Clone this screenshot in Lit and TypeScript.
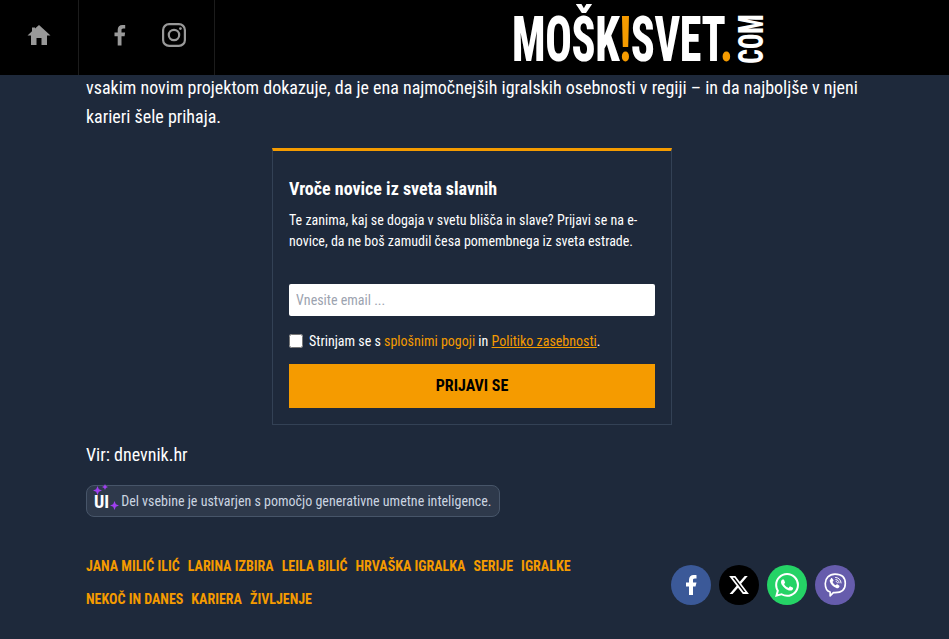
import { LitElement, html, css } from "lit";
import { customElement } from "lit/decorators.js";

@customElement("app-root")
export class AppRoot extends LitElement {
  static styles = css`
    :host { display: block; width: 949px; height: 639px; overflow: hidden; background: #1e293b; color: #fff; font-family: "Roboto Condensed", Roboto, sans-serif; }
    .bar { height: 75px; background: #000; display: flex; position: relative; z-index: 1; }
    .home { width: 79px; display: flex; align-items: center; justify-content: center; border-right: 1px solid #1c1c1c; box-sizing: border-box; padding-bottom: 5px; }
    .social { width: 136px; box-sizing: border-box; border-right: 1px solid #1c1c1c; display: flex; align-items: center; gap: 31px; padding: 0 0 5px 28px; }
    .logo { margin-left: 297px; display: flex; height: 75px; align-items: flex-start; }
    .logo-main { font: 800 63px/75px "Roboto Condensed"; color: #fff; display: block; transform: scaleX(.7); transform-origin: left top; width: 226px; white-space: nowrap; margin-top: 2px; letter-spacing: -.4px; }
    .logo-main b { color: #f59b00; font-weight: 800; }
    .logo-com { width: 26px; height: 46px; margin-top: 16px; position: relative; }
    .logo-com span { position: absolute; left: 13px; top: 23px; font: 800 35px/1 "Roboto Condensed"; color: #fff; white-space: nowrap; transform: translate(-50%, -50%) rotate(-90deg) scaleX(.73); }
    main { padding: 0 86px; }
    .lead { margin: -1px 0 0; font-size: 18px; line-height: 28.8px; }
    .card { width: 400px; height: 277px; box-sizing: border-box; margin: 16px 0 0 186px; border: 1px solid #334155; border-top: 3px solid #f59b00; padding: 27px 16px 16px; }
    h3 { margin: 0; font-size: 18px; font-weight: 700; line-height: 22px; }
    .card p { margin: 10px 0 0; font-size: 14px; line-height: 21px; }
    input[type=email] { display: block; width: 100%; height: 32px; box-sizing: border-box; margin-top: 32px; border: 0; border-radius: 2px; padding: 0 7px; font: inherit; font-size: 14px; background: #fff; }
    input::placeholder { color: #9ca3af; }
    .agree { display: flex; align-items: center; height: 20px; margin-top: 15px; font-size: 14px; gap: 6px; }
    .agree input { width: 14px; height: 14px; margin: 0; }
    .agree a { color: #f59b00; text-decoration: none; }
    .agree a.u { text-decoration: underline; }
    button { display: block; width: 100%; height: 44px; margin-top: 13px; border: 0; background: #f59b00; color: #000; font: inherit; font-weight: 700; font-size: 16px; }
    .vir { margin: 18px 0 0; font-size: 18px; line-height: 24px; }
    .ai { display: flex; align-items: center; height: 32px; box-sizing: border-box; width: 414px; margin-top: 18px; background: #2e394b; border: 1px solid #475569; border-radius: 8px; padding-left: 7px; font-size: 14px; color: #cbd5e1; position: relative; }
    .ai b { color: #fff; font-size: 18px; line-height: 1; padding-top: 2px; }
    .ai span { margin-left: 12px; }
    .spark { position: absolute; fill: #a03ff0; }
    .foot { display: flex; justify-content: space-between; margin-top: 33px; }
    .tags { width: 520px; display: flex; flex-wrap: wrap; gap: 0 8px; }
    .tags a { color: #f59b00; font-weight: 700; font-size: 14px; line-height: 33px; }
    .share { display: flex; gap: 8px; padding: 15px 8px 0 0; }
    .c { width: 40px; height: 40px; border-radius: 50%; display: flex; align-items: center; justify-content: center; fill: #fff; }
    .fb { background: #3b5998; } .x { background: #000; } .wa { background: #25d366; } .vb { background: #665cac; }
  `;
  render() {
    const spark = "M5 0 6.500 3.500 10 5 6.500 6.500 5 10 3.500 6.500 0 5 3.500 3.500z";
    return html`
      <div class="bar">
        <div class="home"><svg width="24" height="24" viewBox="0 0 24 24" fill="#999"><path d="M9.500 22v-7h5v7h5.500v-9.500H23.500L12 2 8 5.600V4.500H5v3.800L.5 12.500H4V22z"/></svg></div>
        <div class="social">
          <svg width="24" height="24" viewBox="0 0 24 24" fill="#999"><path d="M14.500 22.500v-9.300h3.100l.5-3.700h-3.600V7.200c0-1.100.3-1.800 1.800-1.800h1.900V2.100c-.3 0-1.500-.1-2.800-.1-2.800 0-4.700 1.700-4.700 4.800v2.700H7.500v3.700h3.200v9.300z"/></svg>
          <svg width="24" height="24" viewBox="0 0 24 24" fill="none" stroke="#999" stroke-width="2.200"><rect x="1.100" y="1.100" width="21.800" height="21.800" rx="6"/><circle cx="12" cy="12" r="5.200"/><circle cx="18.400" cy="5.600" r="1.400" fill="#999" stroke="none"/></svg>
        </div>
        <div class="logo"><span class="logo-main">MOŠK<b>!</b>SVET<b>.</b></span><div class="logo-com"><span>COM</span></div></div>
      </div>
      <main>
        <p class="lead">vsakim novim projektom dokazuje, da je ena najmočnejših igralskih osebnosti v regiji – in da najboljše v njeni karieri šele prihaja.</p>
        <div class="card">
          <h3>Vroče novice iz sveta slavnih</h3>
          <p>Te zanima, kaj se dogaja v svetu blišča in slave? Prijavi se na e-novice, da ne boš zamudil česa pomembnega iz sveta estrade.</p>
          <input type="email" placeholder="Vnesite email ..." />
          <label class="agree"><input type="checkbox" /><span>Strinjam se s <a>splošnimi pogoji</a> in <a class="u">Politiko zasebnosti</a>.</span></label>
          <button>PRIJAVI SE</button>
        </div>
        <p class="vir">Vir: dnevnik.hr</p>
        <div class="ai">
          <svg class="spark" style="left:6px;top:0" width="9" height="9" viewBox="0 0 10 10"><path d=${spark}/></svg>
          <svg class="spark" style="left:15px;top:-2px" width="6" height="6" viewBox="0 0 10 10"><path d=${spark}/></svg>
          <svg class="spark" style="left:23px;top:15px" width="9" height="9" viewBox="0 0 10 10"><path d=${spark}/></svg>
          <b>UI</b><span>Del vsebine je ustvarjen s pomočjo generativne umetne inteligence.</span></div>
        <div class="foot">
          <div class="tags"><a>JANA MILIĆ ILIĆ</a><a>LARINA IZBIRA</a><a>LEILA BILIĆ</a><a>HRVAŠKA IGRALKA</a><a>SERIJE</a><a>IGRALKE</a><a>NEKOČ IN DANES</a><a>KARIERA</a><a>ŽIVLJENJE</a></div>
          <div class="share">
            <div class="c fb"><svg width="24" height="24" viewBox="0 0 24 24"><path d="M14 13.500h2.500l1-4H14v-2c0-1.030 0-2 2-2h1.500V2.140c-.326-.043-1.557-.14-2.857-.14C11.928 2 10 3.657 10 6.700v2.800H7v4h3V22h4v-8.500z"/></svg></div>
            <div class="c x"><svg width="22" height="22" viewBox="0 0 24 24"><path d="M18.244 2.250h3.308l-7.227 8.260 8.502 11.240H16.170l-5.214-6.817L4.990 21.750H1.680l7.730-8.835L1.254 2.250H8.080l4.713 6.231zm-1.161 17.520h1.833L7.084 4.126H5.117z"/></svg></div>
            <div class="c wa"><svg width="24" height="24" viewBox="0 0 24 24"><path d="M17.472 14.382c-.297-.149-1.758-.867-2.030-.967-.273-.099-.471-.148-.670.150-.197.297-.767.966-.940 1.164-.173.199-.347.223-.644.075-.297-.150-1.255-.463-2.390-1.475-.883-.788-1.480-1.761-1.653-2.059-.173-.297-.018-.458.130-.606.134-.133.298-.347.446-.520.149-.174.198-.298.298-.497.099-.198.050-.371-.025-.520-.075-.149-.669-1.612-.916-2.207-.242-.579-.487-.500-.669-.510-.173-.008-.371-.010-.570-.010-.198 0-.520.074-.792.372-.272.297-1.040 1.016-1.040 2.479 0 1.462 1.065 2.875 1.213 3.074.149.198 2.096 3.200 5.077 4.487.709.306 1.262.489 1.694.625.712.227 1.360.195 1.871.118.571-.085 1.758-.719 2.006-1.413.248-.694.248-1.289.173-1.413-.074-.124-.272-.198-.570-.347m-5.421 7.403h-.004a9.870 9.870 0 01-5.031-1.378l-.361-.214-3.741.982.998-3.648-.235-.374a9.860 9.860 0 01-1.510-5.260c.001-5.450 4.436-9.884 9.888-9.884 2.640 0 5.122 1.030 6.988 2.898a9.825 9.825 0 012.893 6.994c-.003 5.450-4.437 9.884-9.885 9.884m8.413-18.297A11.815 11.815 0 0012.050 0C5.495 0 .160 5.335.157 11.892c0 2.096.547 4.142 1.588 5.945L.057 24l6.305-1.654a11.882 11.882 0 005.683 1.448h.005c6.554 0 11.890-5.335 11.893-11.893a11.821 11.821 0 00-3.480-8.413z"/></svg></div>
            <div class="c vb"><svg width="26" height="26" viewBox="0 0 24 24" fill="none" stroke="#fff" stroke-linecap="round" stroke-linejoin="round"><path stroke-width="1.500" d="M12 2c6 0 9.500 2.500 9.500 8.500S18 19 12 19h-1.500l-3 3v-3.500c-3-1-4.500-3.500-4.500-8S6.500 2 12 2z"/><path fill="#fff" stroke="none" d="M8.200 5.800c.5-.3 1-.2 1.300.2l1 1.400c.3.400.2.900-.2 1.200l-.6.500c.5 1.500 1.500 2.600 3 3.200l.5-.6c.3-.4.800-.5 1.200-.2l1.400 1c.4.300.5.800.2 1.300-.7 1-1.700 1.500-2.800 1-3.200-1.300-5.200-3.300-6-6-.3-1 .3-1.800 1-2.300z"/><path stroke-width=".9" d="M12.500 5c2.800.1 5 2.300 5.100 5.100M12.800 7c1.700.1 2.900 1.300 3 3M13.100 8.800c.7.100 1.100.500 1.200 1.200"/></svg></div>
          </div>
        </div>
      </main>`;
  }
}
